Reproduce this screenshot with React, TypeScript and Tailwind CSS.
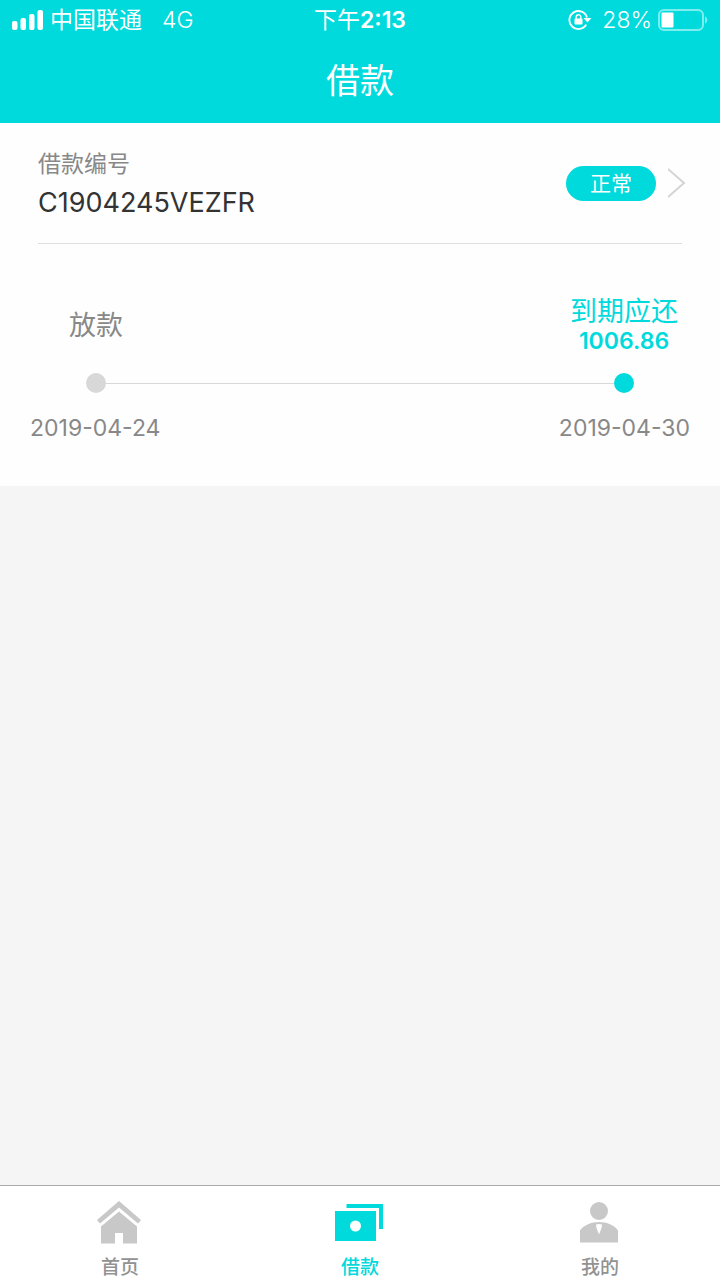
import { useState } from 'react'
import type { ReactNode } from 'react'

interface Tab {
  id: string;
  label: string;
  icon: ReactNode;
}

interface Step {
  label: string;
  amount?: string;
  date: string;
}

const tabs: Tab[] = [
  {
    id: "home",
    label: "首页",
    icon: (
      <svg width="48" height="48" viewBox="0 0 48 48" fill="currentColor" aria-hidden="true">
        <path d="M23 3 45 22 42 25.500 23 9.500 4 25.500 1 22Z" />
        <path d="M23 13.500 41 28.500V45.500H27V35H19V45.500H5V28.500Z" />
      </svg>
    )
  },
  {
    id: "loan",
    label: "借款",
    icon: (
      <svg width="50" height="48" viewBox="0 0 50 48" fill="currentColor" aria-hidden="true">
        <path d="M11.500 6H48V31H44V10H11.500Z" />
        <path fillRule="evenodd" d="M0 13H41V43H0ZM20.500 22.500A5.500 5.500 0 1 0 20.500 33.500A5.500 5.500 0 1 0 20.500 22.500Z" />
      </svg>
    )
  },
  {
    id: "mine",
    label: "我的",
    icon: (
      <svg width="48" height="48" viewBox="0 0 48 48" fill="currentColor" aria-hidden="true">
        <circle cx="23" cy="13" r="9" />
        <path d="M4 44.500V32.500C8 27 15 24 23 24S38 27 42 32.500V44.500Z" />
        <path d="M20 26.500Q23 25.500 26 26.500L25.500 30L23 36.500L20.500 30Z" fill="#fff" />
      </svg>
    )
  }
]

const steps: Step[] = [
  { label: "放款", date: "2019-04-24" },
  { label: "到期应还", amount: "1006.86", date: "2019-04-30" }
]

function StatusBar() {
  return (
    <div className="grid grid-cols-[1fr_auto_1fr] items-center h-10 pl-3 pr-3 text-[23px] leading-10">
      <div className="flex items-center">
        <svg width="32" height="20" viewBox="0 0 32 20" fill="currentColor" aria-hidden="true">
          <rect x="0" y="11" width="5.500" height="9" rx="2" />
          <rect x="8.500" y="8" width="5.500" height="12" rx="2" />
          <rect x="17" y="4" width="5.500" height="16" rx="2" />
          <rect x="25.500" y="0" width="5.500" height="20" rx="2" />
        </svg>
        <span className="ml-1.5">中国联通</span>
        <span className="ml-5 font-light">4G</span>
      </div>
      <span className="font-semibold"><span className="font-normal">下午</span>2:13</span>
      <div className="flex items-center justify-end">
        <svg width="24" height="22" viewBox="0 0 24 22" fill="none" stroke="currentColor" strokeWidth="1.800" aria-hidden="true">
          <path d="M18.200 15.500A9 9 0 1 1 19 8.500" />
          <path d="M15.500 9H23.500L19.500 13.500Z" fill="currentColor" stroke="none" />
          <rect x="6.500" y="9.500" width="8" height="6" rx="1" fill="currentColor" stroke="none" />
          <path d="M8.200 10V8a2.300 2.300 0 0 1 4.600 0V10" strokeWidth="1.400" />
        </svg>
        <span className="ml-2.5 font-light">28%</span>
        <svg className="ml-1.5" width="50" height="22" viewBox="0 0 50 22" fill="none" aria-hidden="true">
          <rect x="1" y="1" width="44" height="20" rx="5" stroke="#7deef0" strokeWidth="2" />
          <rect x="3.500" y="3.500" width="12" height="15" rx="1" fill="#fff" />
          <path d="M47 7.500C50 8.500 50 13.500 47 14.500Z" fill="#7deef0" />
        </svg>
      </div>
    </div>
  )
}

export default function App() {
  const [activeTab, setActiveTab] = useState("loan")

  return (
    <div className="flex flex-col min-h-screen bg-[#f5f5f5] font-['Inter','Noto_Sans_CJK_SC',sans-serif]">
      <header className="bg-[#00dadc] text-white">
        <StatusBar />
        <h1 className="h-[83px] text-center text-[34px] leading-[82px] font-normal">借款</h1>
      </header>

      <main className="flex-1">
        <section className="bg-[#fefefe] pb-[38px]">
          <a href="#detail" className="flex items-center justify-between mx-[38px] h-[121px] border-b border-[#dedede]">
            <div>
              <div className="pt-0.5 text-[23px] leading-[38px] text-[#888]">借款编号</div>
              <div className="text-[27px] leading-10 text-[#333]">C1904245VEZFR</div>
            </div>
            <div className="flex items-center -mr-1">
              <span className="w-[90px] rounded-full bg-[#00dadc] text-center text-[21px] leading-[35px] text-white">正常</span>
              <svg className="ml-3" width="18" height="30" viewBox="0 0 18 30" fill="none" stroke="#d4d4d4" strokeWidth="2" aria-hidden="true">
                <path d="M0 1 16 15 0 29" />
              </svg>
            </div>
          </a>

          {/* Repayment timeline */}
          <div className="flex items-center justify-between px-[30px] pt-11 h-[119px]">
            {steps.map((step) => (
              <div key={step.date} className="w-[132px] text-center">
                {step.amount ? (
                  <div className="text-[#00dadc]">
                    <div className="text-[27px] leading-[30px]">{step.label}</div>
                    <div className="text-[23px] leading-7 font-semibold">{step.amount}</div>
                  </div>
                ) : (
                  <div className="text-[27px] leading-[30px] text-[#888]">{step.label}</div>
                )}
              </div>
            ))}
          </div>
          <div className="flex items-center mt-2.5 px-[86px]">
            <span className="w-5 h-5 rounded-full bg-[#d8d8d8]" />
            <span className="flex-1 h-px bg-[#d8d8d8]" />
            <span className="w-5 h-5 rounded-full bg-[#00dadc]" />
          </div>
          <div className="flex justify-between mt-[15px] px-[30px] text-[23px] leading-10 text-[#888]">
            {steps.map((step) => (
              <time key={step.date} dateTime={step.date}>{step.date}</time>
            ))}
          </div>
        </section>
      </main>

      <nav className="grid grid-cols-3 h-[95px] border-t border-[#aaa] bg-white">
        {tabs.map((tab) => (
          <button
            key={tab.id}
            type="button"
            onClick={() => setActiveTab(tab.id)}
            className={`flex flex-col items-center pt-3 cursor-pointer ${activeTab === tab.id ? 'text-[#00dadc]' : 'text-[#c8c8c8]'}`}
          >
            {tab.icon}
            <span className={`mt-2 text-[19px] leading-7 font-medium ${activeTab === tab.id ? 'text-[#00dadc]' : 'text-[#929292]'}`}>
              {tab.label}
            </span>
          </button>
        ))}
      </nav>
    </div>
  )
}
